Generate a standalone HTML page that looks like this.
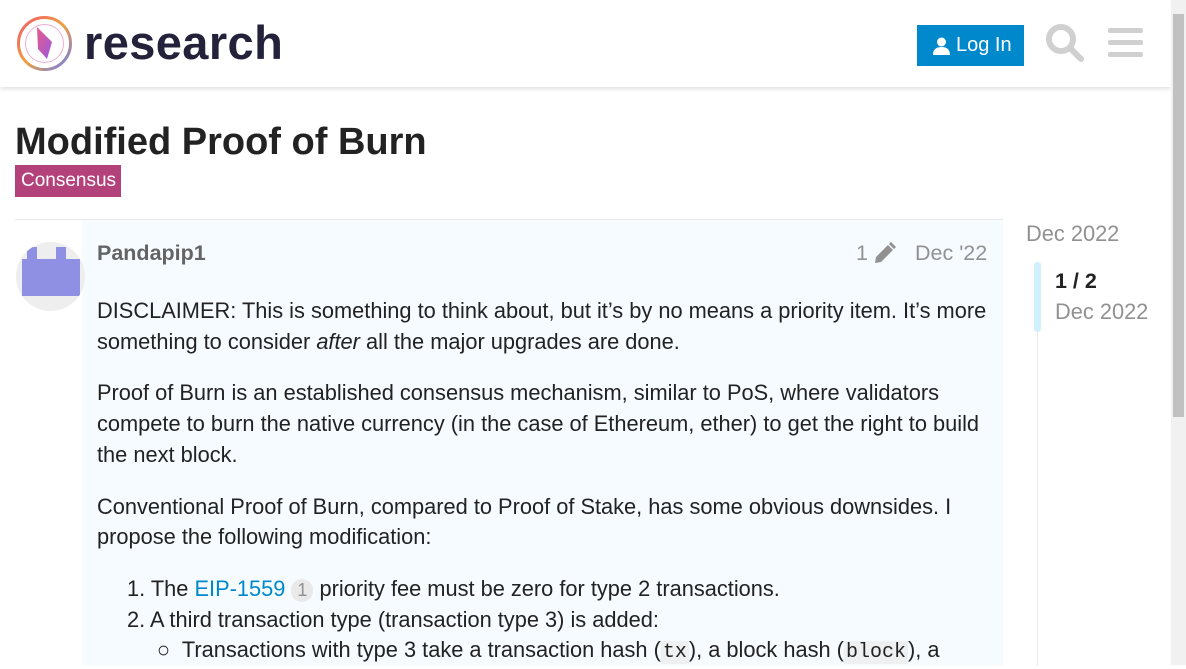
<!DOCTYPE html>
<html><head><meta charset="utf-8"><style>
*{box-sizing:border-box;margin:0;padding:0}
body{width:1186px;height:665px;overflow:hidden;background:#fff;font-family:"Liberation Sans",sans-serif;color:#222;position:relative}
.hdr{position:absolute;left:0;top:0;width:1171px;height:87px;background:#fff;box-shadow:0 2px 4px rgba(0,0,0,.12)}
.logo-t{position:absolute;left:84px;top:15px;font-size:47px;font-weight:bold;color:#24223a;letter-spacing:0.4px}
.btn{position:absolute;left:917px;top:25px;width:107px;height:41px;background:#0088cc;color:#fff;font-size:20px;line-height:41px;padding-left:39px}
.sb{position:absolute;left:1171px;top:0;width:15px;height:665px;background:#f1f1f1}
.sb div{position:absolute;left:2px;top:14px;width:11px;height:403px;background:#c1c1c1}
h1{position:absolute;left:15px;top:121px;font-size:38px;font-weight:bold;color:#222}
.tag{position:absolute;left:15px;top:165px;width:106px;height:32px;background:#b3427a;color:#fff;font-size:19px;line-height:32px;padding-left:6px}
.line{position:absolute;left:15px;top:219px;width:988px;height:1px;background:#e9e9e9}
.post{position:absolute;left:82px;top:220px;width:921px;height:445px;background:#f5fbfe}
.av{position:absolute;left:16px;top:242px;width:69px;height:69px;border-radius:50%;background:#eeeeee;overflow:hidden}
.user{position:absolute;left:97px;top:241px;font-size:21.5px;font-weight:bold;color:#646464}
.meta{position:absolute;top:241px;font-size:21.5px;color:#919191}
.body{position:absolute;left:97px;top:296px;width:905px;font-size:21.8px;line-height:30.7px;color:#222}
.body p{margin-bottom:21px}
code{font-family:"Liberation Mono",monospace;background:#eef0f2;font-size:20px;padding:0 2px}
.tl{position:absolute;font-size:21.8px;color:#919191}
</style></head><body>
<div class="hdr">
<svg style="position:absolute;left:16px;top:15px" width="57" height="57" viewBox="0 0 57 57">
<defs><linearGradient id="g" x1="0" y1="0" x2="1" y2="1"><stop offset="0" stop-color="#f05a6a"/><stop offset=".5" stop-color="#f0a040"/><stop offset="1" stop-color="#6a7af0"/></linearGradient>
<linearGradient id="g2" x1="0" y1="0" x2="1" y2="1"><stop offset="0" stop-color="#e95a8a"/><stop offset="1" stop-color="#9a5ae0"/></linearGradient></defs>
<circle cx="28.5" cy="28.5" r="26" fill="none" stroke="url(#g)" stroke-width="3"/>
<circle cx="28.5" cy="28.5" r="19" fill="none" stroke="#e07ab0" stroke-width="1" opacity=".6"/>
<path d="M21 12 L36 27 L31 44 L22 34 Z" fill="url(#g2)"/>
</svg>
<div class="logo-t">research</div>
<div class="btn"><svg style="position:absolute;left:16px;top:12px" width="17" height="18" viewBox="0 0 17 18"><circle cx="8.5" cy="5" r="4.5" fill="#fff"/><path d="M0 18 Q0 10 8.5 10 Q17 10 17 18Z" fill="#fff"/></svg>Log In</div>
<svg style="position:absolute;left:1045px;top:23px" width="40" height="40" viewBox="0 0 40 40"><circle cx="16" cy="16" r="12" fill="none" stroke="#d0d0d0" stroke-width="6"/><path d="M25 25 L36 36" stroke="#d0d0d0" stroke-width="6" stroke-linecap="round"/></svg>
<svg style="position:absolute;left:1108px;top:27px" width="36" height="32"><rect x="0" y="1" width="35" height="5" rx="2" fill="#d0d0d0"/><rect x="0" y="13" width="35" height="5" rx="2" fill="#d0d0d0"/><rect x="0" y="25" width="35" height="5" rx="2" fill="#d0d0d0"/></svg>
</div>
<div class="sb"><div></div></div>
<h1>Modified Proof of Burn</h1>
<div class="tag">Consensus</div>
<div class="line"></div>
<div class="post"></div>
<div class="av"><svg width="69" height="69"><rect x="6" y="17" width="58" height="37" fill="#8f8fe3"/><rect x="11" y="5" width="10" height="14" fill="#8f8fe3"/><rect x="40" y="5" width="10" height="14" fill="#8f8fe3"/></svg></div>
<div class="user">Pandapip1</div>
<div class="meta" style="left:856px">1</div>
<svg style="position:absolute;left:873px;top:242px" width="23" height="23" viewBox="0 0 23 23"><path d="M2 21 L3 15 L15 3 L20 8 L8 20 Z M16 2 L18 0 L23 5 L21 7Z" fill="#919191"/></svg>
<div class="meta" style="left:915px">Dec '22</div>
<div class="body">
<p>DISCLAIMER: This is something to think about, but it’s by no means a priority item. It’s more something to consider <i>after</i> all the major upgrades are done.</p>
<p>Proof of Burn is an established consensus mechanism, similar to PoS, where validators compete to burn the native currency (in the case of Ethereum, ether) to get the right to build the next block.</p>
<p>Conventional Proof of Burn, compared to Proof of Stake, has some obvious downsides. I propose the following modification:</p>
<div style="padding-left:30px">1. The <span style="color:#0088cc">EIP-1559</span> <span style="display:inline-block;background:#e9e9e9;color:#919191;border-radius:12px;font-size:18px;padding:0 6px;line-height:23px">1</span> priority fee must be zero for type 2 transactions.<br>2. A third transaction type (transaction type 3) is added:<br><span style="padding-left:30px">○&nbsp; Transactions with type 3 take a transaction hash (<code>tx</code>), a block hash (<code>block</code>), a</span></div>
</div>
<div class="tl" style="left:1026px;top:221px">Dec 2022</div>
<div style="position:absolute;left:1034px;top:262px;width:7px;height:70px;background:#d1f0ff;border-radius:3px"></div>
<div style="position:absolute;left:1037px;top:330px;width:1px;height:335px;background:#e9e9e9"></div>
<div style="position:absolute;left:1055px;top:269px;font-size:21.5px;font-weight:bold;color:#222">1 / 2</div>
<div class="tl" style="left:1055px;top:299px">Dec 2022</div>
</body></html>
